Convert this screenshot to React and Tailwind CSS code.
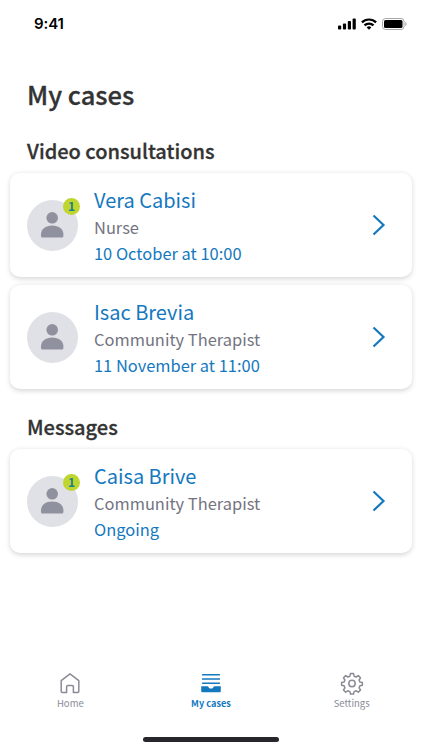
const sections = [
  {
    title: 'Video consultations',
    cases: [
      { name: 'Vera Cabisi', role: 'Nurse', status: '10 October at 10:00', unread: 1 },
      { name: 'Isac Brevia', role: 'Community Therapist', status: '11 November at 11:00' },
    ],
  },
  {
    title: 'Messages',
    cases: [{ name: 'Caisa Brive', role: 'Community Therapist', status: 'Ongoing', unread: 1 }],
  },
];

const HomeIcon = (
  <svg className="w-6 h-6" viewBox="0 0 24 24" fill="none" stroke="currentColor" strokeWidth="1.5" strokeLinejoin="round">
    <path d="M3.2 9.6 12 2.9l8.8 6.7v10.6a1.2 1.2 0 0 1-1.2 1.2h-4.2v-5.6a1.2 1.2 0 0 0-1.2-1.2H9.8a1.2 1.2 0 0 0-1.2 1.2v5.6H4.4a1.2 1.2 0 0 1-1.2-1.2z" />
  </svg>
);

const CasesIcon = (
  <svg className="w-6 h-6" viewBox="0 0 24 24" fill="currentColor">
    <rect x="3" y="3" width="18" height="1.6" rx=".4" />
    <rect x="3" y="7.2" width="18" height="1.6" rx=".4" />
    <rect x="3" y="11.4" width="18" height="1.6" rx=".4" />
    <path d="M2.2 15.2h6.4c.5 0 .7.2.9.7.4 1 1.3 1.5 2.5 1.5s2.1-.5 2.5-1.5c.2-.5.4-.7.9-.7h6.4V20a1.2 1.2 0 0 1-1.2 1.2H3.4A1.2 1.2 0 0 1 2.2 20z" />
  </svg>
);

const SettingsIcon = (
  <svg className="w-6 h-6" viewBox="0 -0.5 24 24" fill="none" stroke="currentColor" strokeWidth="1.5" strokeLinejoin="round">
    <circle cx="12" cy="12" r="3.2" />
    <path d="M10.5 2.1h3l.6 2.6 2 .8 2.2-1.4 2.2 2.2-1.4 2.2.8 2 2.5.5v2.7l-2.5.6-.8 2 1.4 2.2-2.2 2.2-2.2-1.4-2 .8-.6 2.5h-3l-.6-2.5-2-.8-2.2 1.4-2.2-2.2 1.4-2.2-.8-2-2.5-.6V11l2.5-.5.8-2-1.4-2.200 2.200-2.200 2.200 1.400 2-.8z" />
  </svg>
);

const tabs = [
  { label: 'Home', icon: HomeIcon },
  { label: 'My cases', icon: CasesIcon, active: true },
  { label: 'Settings', icon: SettingsIcon },
];

function StatusBar() {
  return (
    <div className="h-[47px] pl-[34px] pr-[15px] flex items-center justify-between text-black">
      <span className="font-['Inter',sans-serif] text-[15px] tracking-[-0.1px] font-semibold leading-[20px]">9:41</span>
      <div className="flex items-center gap-[5px]">
        <svg className="w-[18px] h-[12px]" viewBox="0 0 18 12" fill="currentColor">
          <rect x="0" y="7.5" width="3.2" height="4" rx=".9" />
          <rect x="4.9" y="5.5" width="3.2" height="6" rx=".9" />
          <rect x="9.8" y="3" width="3.2" height="8.5" rx=".9" />
          <rect x="14.6" y=".5" width="3.2" height="11" rx=".9" />
        </svg>
        <svg className="w-[16px] h-[12px]" viewBox="0 0 16 12" fill="none" stroke="currentColor" strokeWidth="2.2">
          <path d="M.9 4.4a10.2 10.2 0 0 1 14.2 0" />
          <path d="M3.5 7.4a6.5 6.5 0 0 1 9 0" />
          <path d="M5.7 9.4a3.3 3.3 0 0 1 4.6 0L8 11.7z" fill="currentColor" stroke="none" />
        </svg>
        <svg className="w-[25px] h-[12px]" viewBox="0 0 25 12" fill="none">
          <rect x=".5" y=".5" width="21.5" height="11" rx="3" stroke="#a6a6a6" />
          <rect x="2" y="2" width="18.5" height="8" rx="1.5" fill="currentColor" />
          <path d="M23.3 4v4c.8-.3 1.3-1.1 1.3-2s-.5-1.7-1.3-2z" fill="#a6a6a6" />
        </svg>
      </div>
    </div>
  );
}

function Avatar({ unread }) {
  return (
    <div className="relative w-[51px] h-[51px] shrink-0 rounded-full bg-[#e0e1e6] text-[#8f919e]">
      <svg className="w-full h-full" viewBox="0 0 51 51" fill="currentColor">
        <circle cx="25.2" cy="17.8" r="5.8" />
        <path d="M14 34.5c0-5.5 4.5-9 11.2-9s11.2 3.5 11.2 9v1.6a1.5 1.5 0 0 1-1.5 1.5H15.5a1.5 1.5 0 0 1-1.5-1.5z" />
      </svg>
      {unread && (
        <span className="absolute -top-[2px] -right-[2px] w-[17px] h-[17px] rounded-full bg-[#c0d630] text-[#1b7f8c] text-[12px] font-bold leading-[16px] text-center">
          {unread}
        </span>
      )}
    </div>
  );
}

function CaseCard({ name, role, status, unread }) {
  return (
    <div className="h-[104px] pl-[17px] pr-[26px] flex items-center rounded-[10px] bg-white shadow-[0_1.5px_5px_rgba(0,0,0,0.16)]">
      <Avatar unread={unread} />
      <div className="ml-4 flex-1 text-[16.45px] text-[#1478be]">
        <p className="text-[20px] leading-[32px] -mb-[2px]">{name}</p>
        <p className="leading-[26px] text-[#737480]">{role}</p>
        <p className="leading-[26px]">{status}</p>
      </div>
      <svg className="w-[14px] h-[22px]" viewBox="0 0 14 22" fill="none" stroke="#1478be" strokeWidth="2.2">
        <path d="m1.5 1.5 10 9.5-10 9.5" />
      </svg>
    </div>
  );
}

function TabBar() {
  return (
    <nav className="grid grid-cols-3 h-[65px]">
      {tabs.map(t => (
        <div
          key={t.label}
          className={`flex flex-col items-center ${t.active ? 'text-[9.2px] text-[#1478be] font-bold' : 'text-[9.5px] text-[#8a8b96]'}`}
        >
          {t.icon}
          <span className="leading-[16px]">{t.label}</span>
        </div>
      ))}
    </nav>
  );
}

export default function App() {
  return (
    <div className="w-[422px] h-[750px] flex flex-col overflow-hidden bg-white font-['Noto_Sans_CJK_SC',sans-serif]">
      <StatusBar />
      <main className="flex-1 px-[10px]">
        <h1 className="mt-[28px] ml-[17px] text-[25.5px] leading-[38px] font-medium text-[#333] [-webkit-text-stroke:0.3px]">My cases</h1>
        {sections.map(s => (
          <section key={s.title} className="mt-[23px]">
            <h2 className="ml-[17px] text-[20px] leading-[30px] mb-[7px] font-medium text-[#333] [-webkit-text-stroke:0.3px]">{s.title}</h2>
            <div className="flex flex-col gap-2">
              {s.cases.map(c => <CaseCard key={c.name} {...c} />)}
            </div>
          </section>
        ))}
      </main>
      <TabBar />
      <div className="w-[136px] h-[5px] mt-[1px] mb-[8px] mx-auto shrink-0 rounded-full bg-[#26262b]" />
    </div>
  );
}
